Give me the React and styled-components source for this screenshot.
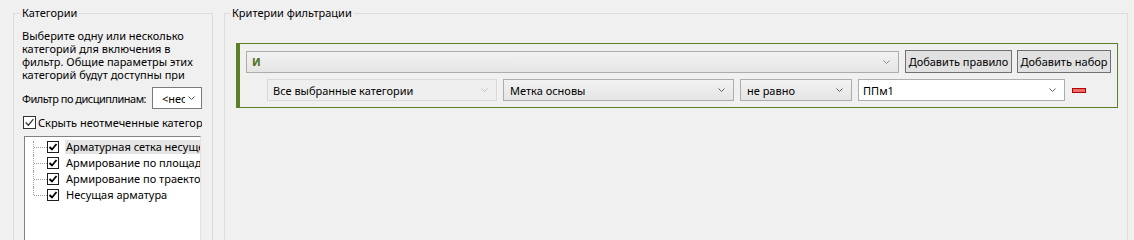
import React from "react"
import styled, { createGlobalStyle } from "styled-components"

const GlobalStyle = createGlobalStyle`
  html, body {
    margin: 0;
    background: #f0f0f0;
    overflow: hidden;
  }
  body {
    font-family: "Noto Sans", "Liberation Sans", sans-serif;
    font-size: 11px;
    color: #000;
  }
`

const Page = styled.div`
  display: flex;
  gap: 11px;
  height: 240px;
  padding: 5px 6px 0 13px;
  box-sizing: border-box;
  overflow: hidden;
`

const Group = styled.fieldset`
  margin: 0;
  padding: 0;
  border: 1px solid #dcdcdc;
  height: 270px;
  box-sizing: border-box;
  min-width: 0;
  ${(p) => (p.$width ? `width: ${p.$width}px; flex: none;` : "flex: 1;")}
`

const Legend = styled.legend`
  margin-left: ${(p) => p.$offset}px;
  padding: 0 2px;
  line-height: 16px;
`

const LeftBody = styled.div`
  padding: 8px 0 0 8px;
  width: 180px;
`

const Hint = styled.p`
  margin: 0;
  line-height: 13px;
  height: 52px;
  overflow: hidden;
`

const FilterRow = styled.div`
  display: flex;
  align-items: center;
  gap: 2px;
  margin-top: 6px;
  width: 180px;
  white-space: nowrap;
`

const FilterLabel = styled.span`
  flex: 1;
  min-width: 0;
  overflow: hidden;
  letter-spacing: -0.5px;
`

const CheckRow = styled.label`
  display: flex;
  align-items: center;
  gap: 2px;
  margin: 7px 0 0 1px;
  height: 13px;
  white-space: nowrap;
  overflow: hidden;
`

const Box = styled.span`
  flex: none;
  display: inline-flex;
  align-items: center;
  justify-content: center;
  width: ${(p) => p.$size}px;
  height: ${(p) => p.$size}px;
  box-sizing: border-box;
  border: 1px solid ${(p) => p.$edge};
  background: #fff;
`

const ListBox = styled.div`
  margin: 7px 0 0 2px;
  width: 177px;
  height: 120px;
  box-sizing: border-box;
  background: #fff;
  border: 1px solid;
  border-color: #828282 #e3e3e3 #e3e3e3 #828282;
  padding: 2px 0 0 8px;
  overflow: hidden;
`

const TreeRow = styled.div`
  display: flex;
  align-items: center;
  height: 16px;
  white-space: nowrap;
`

const Branch = styled.span`
  position: relative;
  flex: none;
  width: 14px;
  height: 16px;
  &::before {
    content: "";
    position: absolute;
    left: 0;
    top: ${(p) => (p.$first ? 2 : 0)}px;
    height: ${(p) => (p.$last ? 8 : 16) - (p.$first ? 2 : 0)}px;
    border-left: 1px dotted #a0a0a0;
  }
  &::after {
    content: "";
    position: absolute;
    left: 1px;
    right: 0;
    top: 8px;
    border-top: 1px dotted #a0a0a0;
  }
`

const ItemText = styled.span`
  margin-left: 6px;
  padding: 0 2px 0 1px;
  line-height: 14px;
  flex: 1;
  background: ${(p) => (p.$selected ? "#e5e5e5" : "transparent")};
`

const Criteria = styled.div`
  padding: 22px 9px 0 11px;
`

const RulePanel = styled.div`
  display: flex;
  flex-direction: column;
  gap: 6px;
  padding: 6px;
  border: 1px solid #5b7f24;
  border-left-width: 4px;
`

const Row = styled.div`
  display: flex;
  align-items: center;
  gap: ${(p) => p.$gap || 6}px;
  padding-left: ${(p) => p.$indent || 0}px;
`

const selectLook = {
  normal: "border-color: #acacac; background: linear-gradient(#f2f2f2, #e5e5e5);",
  disabled: "border-color: #d9d9d9; background: #efefef;",
  edit: "border-color: #abadb3; background: #fff;",
  white: "border-color: #7a7a7a; background: #fff;",
}

const Select = styled.div`
  display: flex;
  align-items: center;
  gap: 3px;
  box-sizing: border-box;
  height: 22px;
  padding: 0 ${(p) => p.$padEnd || 8}px 0 ${(p) => p.$pad || 5}px;
  border: 1px solid;
  ${(p) => selectLook[p.$look || "normal"]}
  ${(p) => (p.$width ? `width: ${p.$width}px; flex: none;` : "flex: 1;")}
  white-space: nowrap;
  overflow: hidden;
`

const Value = styled.span`
  flex: 1;
  min-width: 0;
  overflow: hidden;
  color: ${(p) => p.$color || "#000"};
  font-weight: ${(p) => (p.$bold ? 700 : 400)};
`

const Button = styled.button`
  flex: none;
  width: ${(p) => p.$width}px;
  height: 23px;
  padding: 0;
  border: 1px solid #707070;
  background: #e1e1e1;
  font: inherit;
  color: #000;
  white-space: nowrap;
`

const Remove = styled.span`
  flex: none;
  margin-left: 1px;
  width: 14px;
  height: 5px;
  box-sizing: border-box;
  background: #ee6a6a;
  border: 1px solid #b40000;
`

const Chevron = ({ color = "#606060" }) => (
  <svg width="7" height="4" viewBox="0 0 7 4">
    <polyline points="0.5,0.5 3.5,3.5 6.5,0.5" fill="none" stroke={color} strokeWidth="1" />
  </svg>
)

const Tick = ({ size, color, width }) => (
  <svg width={size} height={size} viewBox="0 0 10 10">
    <polyline points="1.5,5 4,7.5 8.5,2" fill="none" stroke={color} strokeWidth={width} />
  </svg>
)

const categories = [
  "Арматурная сетка несущей",
  "Армирование по площади",
  "Армирование по траектории",
  "Несущая арматура",
]

export default function App() {
  return (
    <>
      <GlobalStyle />
      <Page>
        <Group $width={200}>
          <Legend $offset={6}>Категории</Legend>
          <LeftBody>
            <Hint>
              Выберите одну или несколько категорий для включения в фильтр. Общие параметры этих
              категорий будут доступны при определении правил фильтрации.
            </Hint>
            <FilterRow>
              <FilterLabel>Фильтр по дисциплинам:</FilterLabel>
              <Select $look="white" $width={50} $pad={9} $padEnd={6}>
                <Value>&lt;несколько&gt;</Value>
                <Chevron />
              </Select>
            </FilterRow>
            <CheckRow>
              <Box $size={13} $edge="#333">
                <Tick size={11} color="#333" width={1.1} />
              </Box>
              Скрыть неотмеченные категории
            </CheckRow>
            <ListBox>
              {categories.map((name, i) => (
                <TreeRow key={name}>
                  <Branch $first={i === 0} $last={i === categories.length - 1} />
                  <Box $size={12} $edge="#1e1e1e">
                    <Tick size={10} color="#000" width={1.8} />
                  </Box>
                  <ItemText $selected={i === 0}>{name}</ItemText>
                </TreeRow>
              ))}
            </ListBox>
          </LeftBody>
        </Group>

        <Group>
          <Legend $offset={5}>Критерии фильтрации</Legend>
          <Criteria>
            <RulePanel>
              <Row>
                <Select>
                  <Value $bold $color="#4f7326">И</Value>
                  <Chevron color="#8a8a8a" />
                </Select>
                <Row $gap={5}>
                  <Button $width={107}>Добавить правило</Button>
                  <Button $width={94}>Добавить набор</Button>
                </Row>
              </Row>
              <Row $indent={21}>
                <Select $look="disabled" $width={230}>
                  <Value>Все выбранные категории</Value>
                  <Chevron color="#c0c0c0" />
                </Select>
                <Select $width={231} $pad={6}>
                  <Value>Метка основы</Value>
                  <Chevron />
                </Select>
                <Select $width={112} $pad={6}>
                  <Value>не равно</Value>
                  <Chevron />
                </Select>
                <Select $look="edit" $width={207} $pad={4}>
                  <Value>ППм1</Value>
                  <Chevron />
                </Select>
                <Remove />
              </Row>
            </RulePanel>
          </Criteria>
        </Group>
      </Page>
    </>
  )
}
